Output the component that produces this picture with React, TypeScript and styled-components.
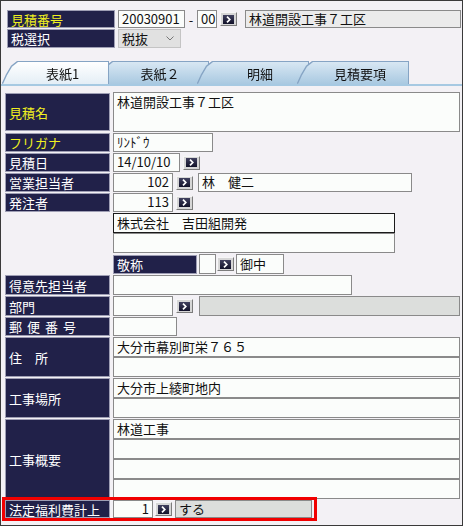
import * as React from 'react';
import styled, { createGlobalStyle } from 'styled-components';

const Global = createGlobalStyle`
  body {
    margin: 0;
    background: #ffffff;
  }
`;

const Window = styled.div`
  width: 463px;
  height: 526px;
  box-sizing: border-box;
  border: 1px solid #3a3a3a;
  background: #f3f1f5;
  font-family: "Noto Sans CJK JP", "Noto Sans", sans-serif;
  font-size: 13px;
  color: #111;
  display: flex;
  flex-direction: column;
`;

const Header = styled.div`
  display: flex;
  flex-direction: column;
  gap: 1px;
  padding: 9px 0 0 6px;
`;

const HeadRow = styled.div<{ $h: number }>`
  display: flex;
  align-items: center;
  gap: 3px;
  height: ${p => p.$h}px;
`;

const Label = styled.div<{ $w?: number; $yellow?: boolean; $spread?: boolean }>`
  flex: none;
  width: ${p => p.$w ?? 105}px;
  box-sizing: border-box;
  align-self: stretch;
  background: #212149;
  border: 1px solid #9e9eb4;
  color: ${p => (p.$yellow ? '#f0f020' : '#ffffff')};
  display: flex;
  align-items: center;
  padding-left: 3px;
  white-space: nowrap;
  line-height: 1;
  letter-spacing: ${p => (p.$spread ? '5px' : '0')};
`;

const Field = styled.div<{ $w: number; $h?: number; $right?: boolean; $tone?: 'white' | 'gray' | 'light'; $dark?: boolean; $top?: boolean }>`
  flex: none;
  width: ${p => p.$w}px;
  height: ${p => p.$h ?? 19}px;
  box-sizing: border-box;
  border: 1px solid ${p => (p.$dark ? '#1a1a1a' : '#8a8a8a')};
  background: ${p => (p.$tone === 'gray' ? '#dcdedc' : p.$tone === 'light' ? '#ebebeb' : '#fbfdfb')};
  padding: ${p => (p.$top ? '2px 3px 0' : '0 3px')};
  display: flex;
  align-items: ${p => (p.$top ? 'flex-start' : 'center')};
  justify-content: ${p => (p.$right ? 'flex-end' : 'flex-start')};
  white-space: nowrap;
  overflow: hidden;
  line-height: 1.1;
`;

const Dash = styled.span`
  width: 6px;
  text-align: center;
`;

const SelectBox = styled.div`
  width: 63px;
  height: 19px;
  box-sizing: border-box;
  border: 1px solid #c4c4c4;
  background: #e1e1e1;
  display: flex;
  align-items: center;
  justify-content: space-between;
  padding: 0 6px 0 3px;
`;

const GoOuter = styled.span<{ $ml?: number }>`
  flex: none;
  width: 17px;
  height: 14px;
  margin-left: ${p => p.$ml ?? 0}px;
  align-self: center;
  box-sizing: border-box;
  background: #d6d6d6;
  border: 1px solid;
  border-color: #f6f6f6 #7c7c7c #7c7c7c #f6f6f6;
  display: flex;
  align-items: center;
  justify-content: center;
`;

const GoFace = styled.span`
  width: 11px;
  height: 9px;
  background: linear-gradient(#40405e, #12122a);
  display: flex;
  align-items: center;
  justify-content: center;
`;

const Go = ({ ml }: { ml?: number }) => (
  <GoOuter $ml={ml}>
    <GoFace>
      <svg width="5" height="7" viewBox="0 0 5 7">
        <path d="M1 0.6 L3.8 3.5 L1 6.4" stroke="#fff" strokeWidth="1.7" fill="none" />
      </svg>
    </GoFace>
  </GoOuter>
);

const TabBar = styled.div`
  display: flex;
  height: 22px;
  margin-top: 14px;
  padding-left: 2px;
  border-bottom: 2px solid #a6c9e2;
`;

const TabWrap = styled.div<{ $z: number; $first?: boolean }>`
  position: relative;
  z-index: ${p => p.$z};
  margin-left: ${p => (p.$first ? 0 : -10)}px;
  filter: drop-shadow(1px 0 0 #86a4c4) drop-shadow(-1px 0 0 #86a4c4) drop-shadow(0 -1px 0 #86a4c4);
`;

const Tab = styled.div<{ $active?: boolean; $w: number }>`
  width: ${p => p.$w}px;
  height: 22px;
  box-sizing: border-box;
  padding-left: 14px;
  clip-path: polygon(0 100%, 4px 60%, 9px 22%, 15px 0, 100% 0, 100% 100%);
  background: ${p => (p.$active ? 'linear-gradient(#ffffff, #e4eef6)' : 'linear-gradient(#d8e7f3, #a9c9e1)')};
  display: flex;
  align-items: center;
  justify-content: center;
  color: #111;
`;

const Form = styled.div`
  display: flex;
  flex-direction: column;
  gap: 1px;
  padding: 6px 0 0 4px;
`;

const Row = styled.div<{ $h?: number }>`
  display: flex;
  align-items: flex-start;
  gap: 3px;
  height: ${p => p.$h ?? 19}px;
`;

const Spacer = styled.div`
  flex: none;
  width: 105px;
`;

const Stack = styled.div`
  display: flex;
  flex-direction: column;
`;

const Highlight = styled.div`
  align-self: flex-start;
  margin: -3px 0 0 -3px;
  border: 3px solid #f10000;
  padding-right: 2px;
`;

const tabs = ['表紙1', '表紙２', '明細', '見積要項'];

const Lines = ({ rows }: { rows: string[] }) => (
  <Stack>
    {rows.map((t, i) => (
      <Field key={i} $w={347} $h={20}>
        {t}
      </Field>
    ))}
  </Stack>
);

const App = () => (
  <Window>
    <Global />
    <Header>
      <HeadRow $h={18}>
        <Label $w={108} $yellow>見積番号</Label>
        <Field $w={67} $h={18}>20030901</Field>
        <Dash>-</Dash>
        <Field $w={20} $h={18}>00</Field>
        <Go />
        <Field $w={216} $h={18} $tone="light" style={{ marginLeft: 5 }}>
          林道開設工事７工区
        </Field>
      </HeadRow>
      <HeadRow $h={19}>
        <Label $w={108}>税選択</Label>
        <SelectBox>
          <span>税抜</span>
          <svg width="8" height="5" viewBox="0 0 8 5">
            <path d="M0.5 0.5 L4 4 L7.5 0.5" stroke="#777" strokeWidth="1" fill="none" />
          </svg>
        </SelectBox>
      </HeadRow>
    </Header>

    <TabBar>
      {tabs.map((t, i) => (
        <TabWrap key={t} $first={i === 0} $z={i === 0 ? 10 : i}>
          <Tab $active={i === 0} $w={i === 0 ? 105 : 110}>
            {t}
          </Tab>
        </TabWrap>
      ))}
    </TabBar>

    <Form>
      <Row $h={40}>
        <Label $yellow style={{ height: 38, alignSelf: 'center' }}>見積名</Label>
        <Field $w={347} $h={40} $top>林道開設工事７工区</Field>
      </Row>
      <Row>
        <Label $yellow>フリガナ</Label>
        <Field $w={100}>ﾘﾝﾄﾞｳ</Field>
      </Row>
      <Row>
        <Label>見積日</Label>
        <Field $w={67}>14/10/10</Field>
        <Go />
      </Row>
      <Row>
        <Label>営業担当者</Label>
        <Field $w={60} $right>102</Field>
        <Go />
        <Field $w={214} style={{ marginLeft: 2 }}>林　健二</Field>
      </Row>
      <Row>
        <Label>発注者</Label>
        <Field $w={60} $right>113</Field>
        <Go />
      </Row>
      <Row $h={40}>
        <Spacer />
        <Stack>
          <Field $w={282} $h={20} $dark>株式会社　吉田組開発</Field>
          <Field $w={282} $h={20} />
        </Stack>
      </Row>
      <Row $h={20}>
        <Spacer />
        <Label $w={84} style={{ marginTop: 1 }}>敬称</Label>
        <Field $w={17} $h={20} style={{ marginLeft: -1 }} />
        <Go ml={-2} />
        <Field $w={48} $h={20} style={{ marginLeft: -1 }}>御中</Field>
      </Row>
      <Row $h={20}>
        <Label>得意先担当者</Label>
        <Field $w={239} $h={20} />
      </Row>
      <Row $h={20}>
        <Label>部門</Label>
        <Field $w={60} $h={20} />
        <Go />
        <Field $w={261} $h={20} $tone="gray" style={{ marginLeft: 3 }} />
      </Row>
      <Row $h={19}>
        <Label $spread>郵便番号</Label>
        <Field $w={64} $h={19} />
      </Row>
      <Row $h={40}>
        <Label>住　所</Label>
        <Lines rows={['大分市幕別町栄７６５', '']} />
      </Row>
      <Row $h={40}>
        <Label>工事場所</Label>
        <Lines rows={['大分市上綾町地内', '']} />
      </Row>
      <Row $h={80}>
        <Label>工事概要</Label>
        <Lines rows={['林道工事', '', '', '']} />
      </Row>
      <Highlight>
        <Row $h={18}>
          <Label>法定福利費計上</Label>
          <Field $w={40} $h={18} $right>1</Field>
          <Go ml={-1} />
          <Field $w={137} $h={18} $tone="gray">する</Field>
        </Row>
      </Highlight>
    </Form>
  </Window>
);

export default App;
